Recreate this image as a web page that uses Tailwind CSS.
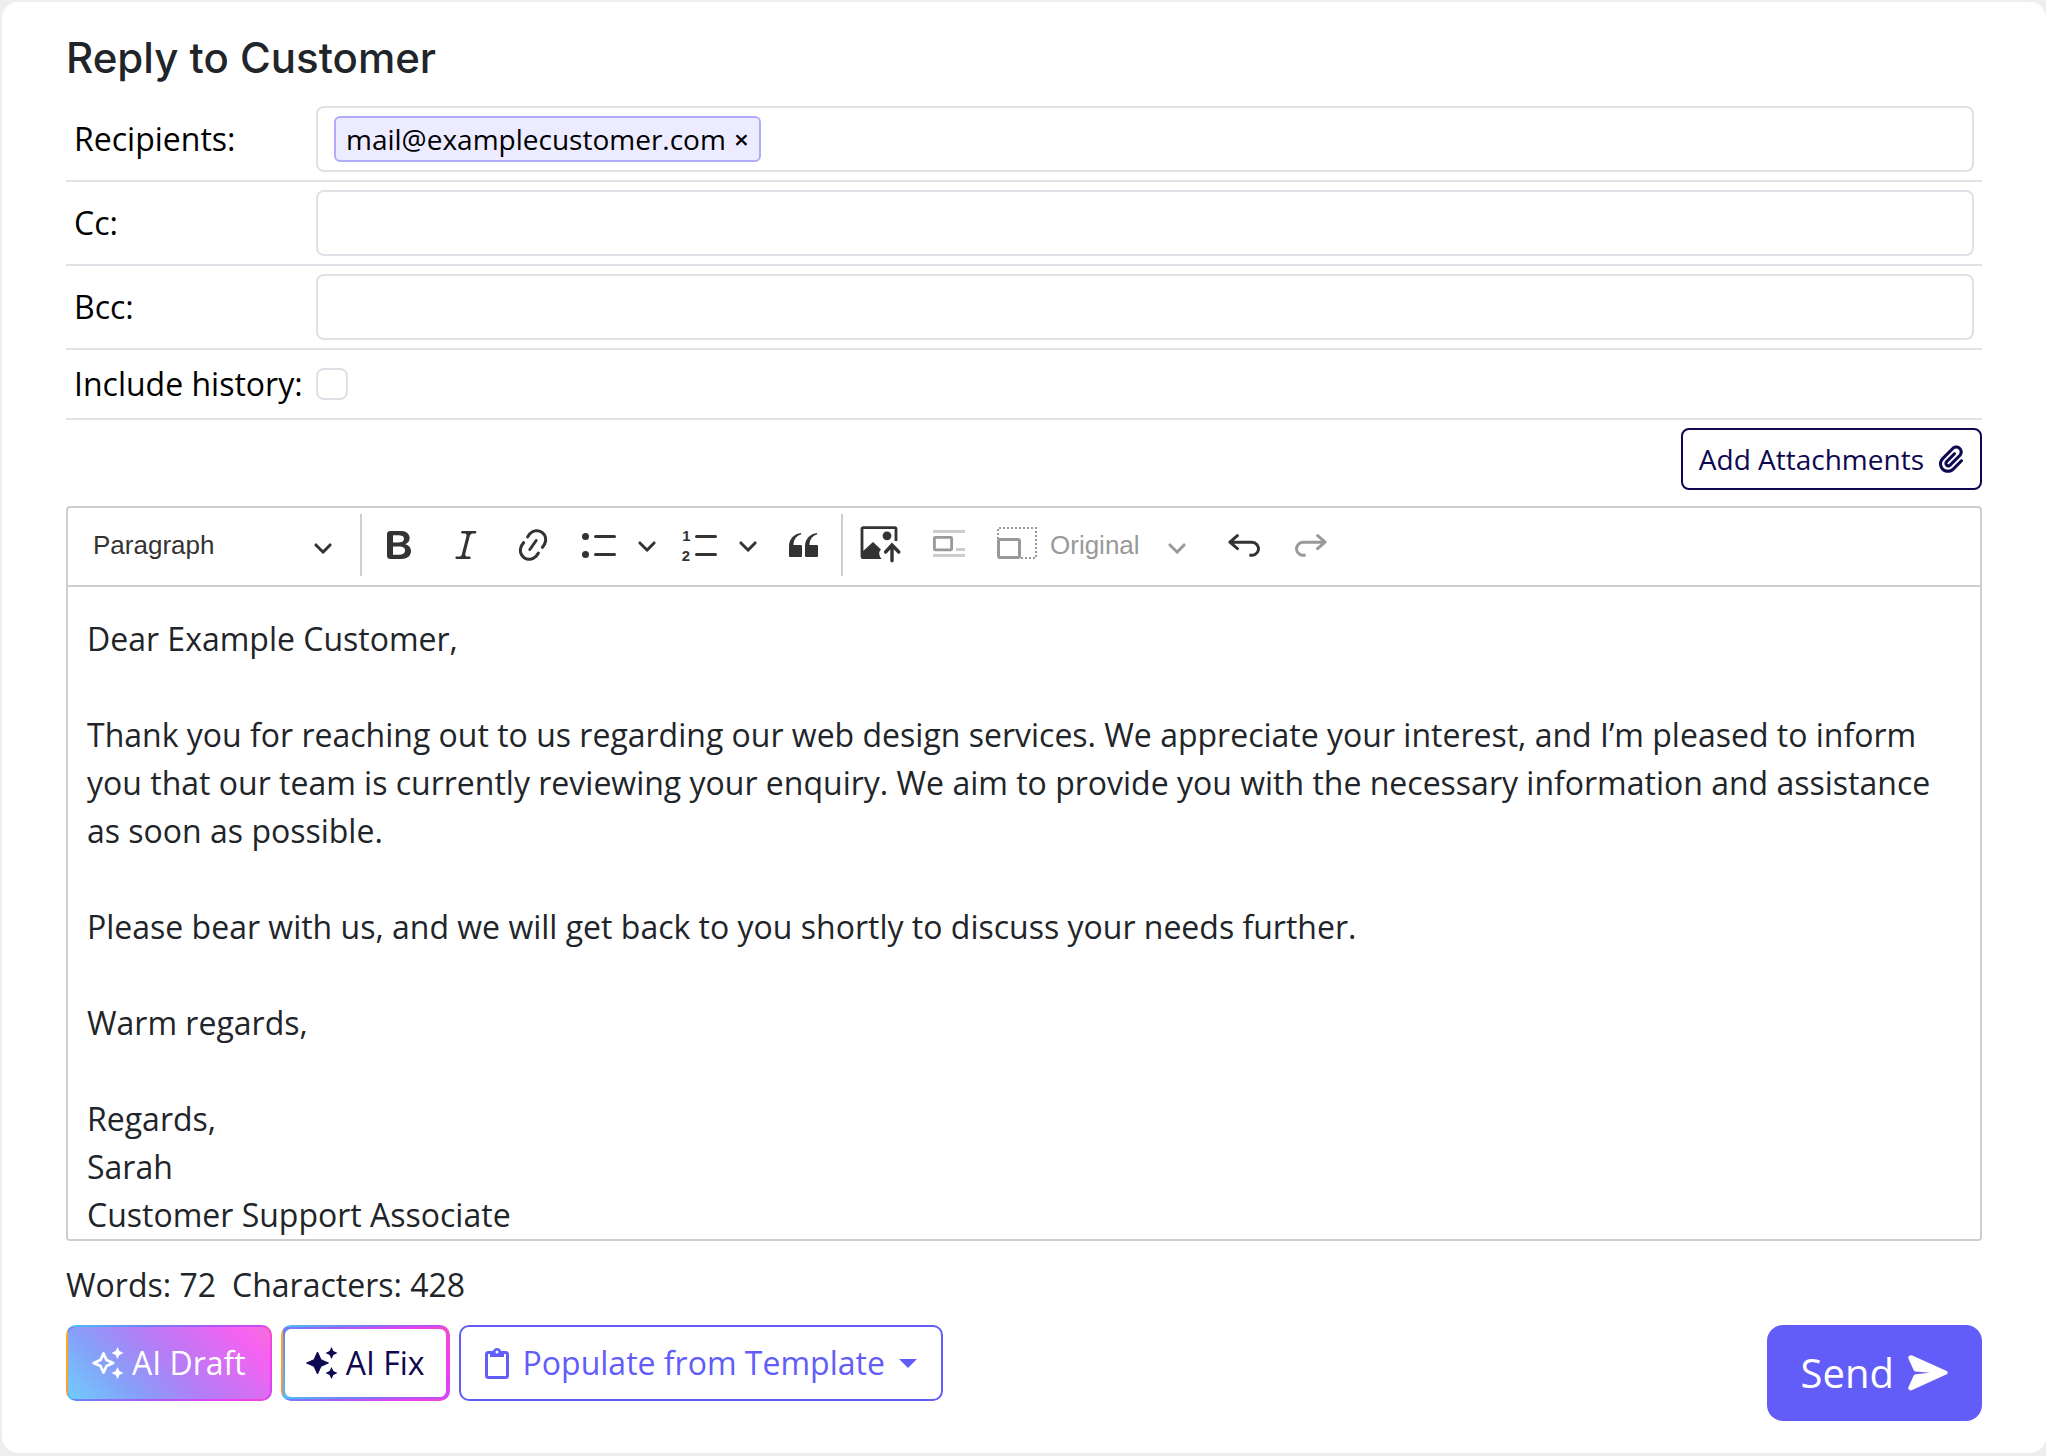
<!DOCTYPE html>
<html lang="en">
<head>
  <meta charset="utf-8">
  <meta name="viewport" content="width=device-width, initial-scale=1">
  <title>Reply to Customer</title>
  <script src="https://cdn.jsdelivr.net/npm/@tailwindcss/browser@4"></script>
</head>
<body class="flex min-h-screen flex-col bg-[#eeeeee] pt-[2px] pb-[3px] pl-[2px] font-['Open_Sans',sans-serif] text-[32px] leading-[48px] text-[#212529]">

<!-- shared icons -->
<svg class="hidden">
  <symbol id="chevron" viewBox="0 0 10 10">
    <path d="M.941 4.523a.75.75 0 1 1 1.06-1.06l3.006 3.005 3.005-3.005a.75.75 0 1 1 1.06 1.06l-3.549 3.55a.75.75 0 0 1-1.168-.136L.941 4.523z"/>
  </symbol>
</svg>

<form class="flex-1 rounded-2xl bg-white px-16 pt-8 pb-8" onsubmit="return false">
  <h2 class="mb-4 font-['Inter',sans-serif] text-[42px] leading-[48px] font-medium">Reply to Customer</h2>

  <!-- recipients -->
  <div class="text-black">
    <div class="flex items-center border-b-2 border-[#dee2e6] p-2">
      <label for="to" class="w-[242px] shrink-0">Recipients:</label>
      <div class="flex h-[66px] flex-1 items-center gap-2 rounded-lg border-2 border-[#dee2e6] px-4">
        <span class="flex h-[46px] items-center gap-2 rounded-md border-2 border-[#b1abfc] bg-[#ecebff] px-[10px] text-[28px]">
          mail@examplecustomer.com
          <button type="button" aria-label="Remove" class="text-[26px] leading-8 font-semibold">×</button>
        </span>
        <input id="to" type="text" class="min-w-0 flex-1 outline-none">
      </div>
    </div>
    <div class="flex items-center border-b-2 border-[#dee2e6] p-2">
      <label for="cc" class="w-[242px] shrink-0">Cc:</label>
      <input id="cc" type="text" class="h-[66px] min-w-0 flex-1 rounded-lg border-2 border-[#dee2e6] px-4 outline-none">
    </div>
    <div class="flex items-center border-b-2 border-[#dee2e6] p-2">
      <label for="bcc" class="w-[242px] shrink-0">Bcc:</label>
      <input id="bcc" type="text" class="h-[66px] min-w-0 flex-1 rounded-lg border-2 border-[#dee2e6] px-4 outline-none">
    </div>
    <div class="flex h-[70px] items-center border-b-2 border-[#dee2e6] p-2">
      <label for="history" class="w-[242px] shrink-0">Include history:</label>
      <input id="history" type="checkbox" class="size-8 appearance-none rounded-lg border-2 border-[#dee2e6] checked:bg-[#625df9]">
    </div>
  </div>

  <div class="mt-2 mb-4 flex justify-end">
    <button type="button" class="flex h-[62px] items-center gap-[14px] rounded-lg border-2 border-[#0e0850] px-4 text-[28px] text-[#0e0850]">
      Add Attachments
      <svg class="h-7 w-[26px]" viewBox="0 0 448 512" fill="currentColor"><path d="M364.2 83.8c-24.4-24.4-64-24.4-88.4 0l-184 184c-42.1 42.1-42.1 110.3 0 152.4s110.3 42.1 152.4 0l152-152c10.9-10.9 28.7-10.9 39.6 0s10.9 28.7 0 39.6l-152 152c-64 64-167.6 64-231.6 0s-64-167.6 0-231.6l184-184c46.3-46.3 121.3-46.3 167.6 0s46.3 121.3 0 167.6l-176 176c-28.6 28.6-75 28.6-103.6 0s-28.6-75 0-103.6l144-144c10.9-10.9 28.7-10.9 39.6 0s10.9 28.7 0 39.6l-144 144c-6.7 6.7-6.7 17.7 0 24.4s17.7 6.7 24.4 0l176-176c24.4-24.4 24.4-64 0-88.4z"/></svg>
    </button>
  </div>

  <!-- editor -->
  <div class="rounded border-2 border-[#ccced1]">
    <div class="flex h-[79px] items-center gap-[7px] border-b-2 border-[#ccced1] pb-[3px] font-['Liberation_Sans',sans-serif] text-[26px] leading-8 text-[#333333]">
      <div class="relative w-[285px]">
        <select aria-label="Heading" class="w-full appearance-none pl-[25px] outline-none">
          <option>Paragraph</option>
          <option>Heading 1</option>
          <option>Heading 2</option>
        </select>
        <svg class="pointer-events-none absolute top-2 right-5 size-5" fill="currentColor"><use href="#chevron"/></svg>
      </div>
      <span class="h-[62px] w-[2px] bg-[#ccced1]"></span>
      <button type="button" aria-label="Bold" class="flex w-[60px] justify-center">
        <svg class="size-10" viewBox="0 0 20 20" fill="currentColor"><path d="M10.187 17H5.773c-.637 0-1.092-.138-1.364-.415-.273-.277-.409-.718-.409-1.323V4.738c0-.617.14-1.062.419-1.332.279-.27.73-.406 1.354-.406h4.68c.69 0 1.288.041 1.793.124.506.083.96.242 1.36.478.341.197.644.447.906.75a3.262 3.262 0 0 1 .808 2.162c0 1.401-.722 2.426-2.167 3.075C15.05 10.175 16 11.315 16 13.01a3.756 3.756 0 0 1-2.296 3.504 6.1 6.1 0 0 1-1.517.377c-.571.073-1.238.11-2 .11zm-.217-6.217H7v4.087h3.069c1.977 0 2.965-.69 2.965-2.072 0-.707-.256-1.22-.768-1.537-.512-.319-1.277-.478-2.296-.478zM7 5.13v3.619h2.606c.729 0 1.292-.067 1.69-.2a1.6 1.6 0 0 0 .91-.765c.165-.267.247-.566.247-.897 0-.707-.26-1.176-.778-1.409-.519-.232-1.31-.348-2.375-.348H7z"/></svg>
      </button>
      <button type="button" aria-label="Italic" class="flex w-[60px] justify-center">
        <svg class="size-10" viewBox="0 0 20 20" fill="currentColor"><path d="m9.586 14.633.021.004c-.036.335.095.655.393.962.082.083.173.15.274.201h1.474a.6.6 0 1 1 0 1.2H5.304a.6.6 0 0 1 0-1.2h1.15c.474-.07.809-.182 1.005-.334.157-.122.291-.32.404-.597l2.416-9.55a1.053 1.053 0 0 0-.281-.823 1.12 1.12 0 0 0-.442-.296H8.15a.6.6 0 0 1 0-1.2h6.443a.6.6 0 1 1 0 1.2h-1.195c-.376.056-.65.155-.823.296-.215.175-.423.439-.623.79l-2.366 9.347z"/></svg>
      </button>
      <button type="button" aria-label="Link" class="flex w-[60px] justify-center">
        <svg class="size-10" viewBox="0 0 20 20" fill="currentColor"><path d="m11.077 15 .991-1.416a.75.75 0 1 1 1.229.86l-1.148 1.64a.748.748 0 0 1-.217.206 5.251 5.251 0 0 1-8.503-5.955.741.741 0 0 1 .12-.274l1.147-1.639a.75.75 0 1 1 1.228.86L4.933 10.7l.006.003a3.75 3.75 0 0 0 6.132 4.294l.006.004zm5.494-5.335a.748.748 0 0 1-.12.274l-1.147 1.639a.75.75 0 1 1-1.228-.86l.86-1.23a3.75 3.75 0 0 0-6.144-4.301l-.86 1.229a.75.75 0 0 1-1.229-.86l1.148-1.64a.748.748 0 0 1 .217-.206 5.251 5.251 0 0 1 8.503 5.955zm-4.563-2.532a.75.75 0 0 1 .184 1.045l-3.155 4.505a.75.75 0 1 1-1.229-.86l3.155-4.506a.75.75 0 0 1 1.045-.184z"/></svg>
      </button>
      <div class="flex items-center">
        <button type="button" aria-label="Bulleted list" class="flex w-[60px] justify-center">
          <svg class="size-10" viewBox="0 0 20 20" fill="currentColor"><path d="M7 5.75c0 .414.336.75.75.75h9.5a.75.75 0 1 0 0-1.5h-9.5a.75.75 0 0 0-.75.75zm0 9c0 .414.336.75.75.75h9.5a.75.75 0 1 0 0-1.5h-9.5a.75.75 0 0 0-.75.75z"/><circle cx="2.75" cy="5.75" r="1.75"/><circle cx="2.75" cy="14.75" r="1.75"/></svg>
        </button>
        <button type="button" aria-label="Bulleted list styles" class="flex w-[34px] justify-center">
          <svg class="size-5" fill="currentColor"><use href="#chevron"/></svg>
        </button>
      </div>
      <div class="flex items-center">
        <button type="button" aria-label="Numbered list" class="flex w-[60px] justify-center">
          <svg class="size-10" viewBox="0 0 20 20" fill="currentColor"><path d="M7 5.75c0 .414.336.75.75.75h9.5a.75.75 0 1 0 0-1.5h-9.5a.75.75 0 0 0-.75.75zm0 9c0 .414.336.75.75.75h9.5a.75.75 0 1 0 0-1.5h-9.5a.75.75 0 0 0-.75.75z"/><text x="0.6" y="8" font-size="7.4" font-weight="700">1</text><text x="0.4" y="18" font-size="7.4" font-weight="700">2</text></svg>
        </button>
        <button type="button" aria-label="Numbered list styles" class="flex w-[34px] justify-center">
          <svg class="size-5" fill="currentColor"><use href="#chevron"/></svg>
        </button>
      </div>
      <button type="button" aria-label="Block quote" class="flex w-[62px] justify-center">
        <svg class="size-10" viewBox="0 0 20 20" fill="currentColor"><path d="M3 10.423a6.5 6.5 0 0 1 6.056-6.408l.038.67C6.448 5.423 5.354 7.663 5.22 10H9c.552 0 .5.432.5.986v4.511c0 .554-.448.503-1 .503h-5c-.552 0-.5-.449-.5-1.003v-4.574zm8 0a6.5 6.5 0 0 1 6.056-6.408l.038.67c-2.646.739-3.74 2.979-3.873 5.315H17c.552 0 .5.432.5.986v4.511c0 .554-.448.503-1 .503h-5c-.552 0-.5-.449-.5-1.003v-4.574z"/></svg>
      </button>
      <span class="h-[62px] w-[2px] bg-[#ccced1]"></span>
      <button type="button" aria-label="Insert image" class="flex w-[60px] justify-center">
        <svg class="size-10 overflow-visible" viewBox="0 0 20 20" fill="currentColor">
          <path d="M18 8V1.8a.5.5 0 0 0-.5-.5h-16a.5.5 0 0 0-.5.5v14.4" fill="none" stroke="currentColor" stroke-width="1.4"/>
          <path d="M.6 13.9 6.5 8.5l4 3.7c-1 .9-1 1.9-.8 2.6.1.9.5 1.6 1.2 2.2H1a.5.5 0 0 1-.4-.5z"/>
          <circle cx="13.5" cy="5.4" r="2.2"/>
          <path d="M16 10v7.9M12.8 13.5 16 10l3.4 3.5" fill="none" stroke="currentColor" stroke-width="1.7" stroke-linecap="round"/>
        </svg>
      </button>
      <button type="button" aria-label="Wrap text" disabled class="flex w-[60px] justify-center text-[#999999]">
        <svg class="size-10" viewBox="0 0 20 20" fill="currentColor">
          <path d="M3 2.500h16V4H3zM3 14.500h16V16H3zM14.500 11.500H19V13h-4.500z" opacity=".5"/>
          <rect x="3.700" y="6.200" width="8.600" height="6.200" rx=".4" fill="none" stroke="currentColor" stroke-width="1.400"/>
        </svg>
      </button>
      <div class="relative w-[223px] text-[#999999]">
        <svg class="pointer-events-none absolute -top-1 left-[13px] size-10" viewBox="0 0 20 20" fill="none" stroke="currentColor">
          <path d="M.5 7V1.500h19v15H12" stroke-dasharray="1 1"/>
          <rect x=".75" y="7.250" width="10.500" height="9" rx=".7" stroke-width="1.500"/>
        </svg>
        <select aria-label="Resize image" disabled class="w-full appearance-none pl-[66px] outline-none">
          <option>Original</option>
        </select>
        <svg class="pointer-events-none absolute top-2 right-5 size-5" fill="currentColor"><use href="#chevron"/></svg>
      </div>
      <button type="button" aria-label="Undo" class="flex w-[60px] justify-center">
        <svg class="size-10" viewBox="0 0 20 20" fill="currentColor"><path d="m5.042 9.367 2.189 1.837a.75.75 0 0 1-.965 1.149l-3.788-3.18a.747.747 0 0 1-.21-.284.75.75 0 0 1 .17-.945L6.23 4.762a.75.75 0 1 1 .964 1.15L4.863 7.866h8.917A.75.75 0 0 1 14 7.9a4 4 0 1 1-1.477 7.718l.344-1.489a2.5 2.5 0 1 0 1.094-4.73l.008-.032H5.042z"/></svg>
      </button>
      <button type="button" aria-label="Redo" disabled class="flex w-[60px] justify-center text-[#999999]">
        <svg class="size-10" viewBox="0 0 20 20" fill="currentColor"><path d="m14.958 9.367-2.189 1.837a.75.75 0 0 0 .965 1.149l3.788-3.18a.747.747 0 0 0 .21-.284.75.75 0 0 0-.17-.945L13.77 4.762a.75.75 0 1 0-.964 1.15l2.331 1.955H6.22A.75.75 0 0 0 6 7.9a4 4 0 1 0 1.477 7.718l-.344-1.489A2.5 2.5 0 1 1 6.039 9.4l-.008-.032h8.927z"/></svg>
      </button>
    </div>
    <div contenteditable="true" spellcheck="false" role="textbox" aria-label="Message" class="space-y-12 px-[19px] pt-7 outline-none">
      <p>Dear Example Customer,</p>
      <p>Thank you for reaching out to us regarding our web design services. We appreciate your interest, and I’m pleased to inform you that our team is currently reviewing your enquiry. We aim to provide you with the necessary information and assistance as soon as possible.</p>
      <p>Please bear with us, and we will get back to you shortly to discuss your needs further.</p>
      <p>Warm regards,</p>
      <p>Regards,<br>Sarah<br>Customer Support Associate</p>
    </div>
  </div>

  <div class="mt-5 mb-4 flex gap-4">
    <span>Words: 72</span>
    <span>Characters: 428</span>
  </div>

  <!-- actions -->
  <div class="flex items-start gap-[9px]">
    <button type="button" class="h-[76px] rounded-[10px] border-2 border-transparent bg-[linear-gradient(45deg,#4cc0fb_0%,#6a86f7_16%,#a45bf4_30%,#f33bef_50%,#f27090_75%,#ffa520_90%)] bg-[length:200%_100%] text-white">
      <span class="flex h-full items-center gap-2 rounded-lg bg-white/20 px-6">
        <svg class="size-8" viewBox="0 0 32 32" fill="currentColor">
          <path d="M11.500 6.500 14.500 13l6.700 3-6.700 3-3 6.500-3-6.500-6.700-3 6.700-3z" fill="none" stroke="currentColor" stroke-width="2.800" stroke-linejoin="round"/>
          <path d="M25.500 0l1.900 4.100L31.500 6l-4.100 1.900-1.900 4.100-1.900-4.100L19.500 6l4.100-1.900zM25.500 20l1.900 4.100 4.100 1.900-4.100 1.900-1.900 4.100-1.900-4.100-4.100-1.900 4.100-1.900z"/>
        </svg>
        AI Draft
      </span>
    </button>
    <button type="button" class="h-[76px] rounded-[10px] border-2 border-transparent bg-[linear-gradient(45deg,#4cc0fb_0%,#6a86f7_16%,#a45bf4_30%,#f33bef_50%,#f27090_75%,#ffa520_90%)] bg-[length:200%_100%] p-[2px] text-[#0e0850]">
      <span class="flex h-full items-center gap-2 rounded-md bg-white px-[21px]">
        <svg class="size-8" viewBox="0 0 32 32" fill="currentColor">
          <path d="M11.500 5 15 12.700l7.500 3.300-7.500 3.300L11.500 27 8 19.300.500 16 8 12.700z" stroke="currentColor" stroke-width="1" stroke-linejoin="round"/>
          <path d="M25.500 0l1.900 4.100L31.500 6l-4.100 1.900-1.900 4.100-1.900-4.100L19.500 6l4.100-1.900zM25.500 20l1.900 4.100 4.100 1.900-4.100 1.900-1.900 4.100-1.900-4.100-4.100-1.900 4.100-1.900z"/>
        </svg>
        AI Fix
      </span>
    </button>
    <button type="button" class="flex h-[76px] items-center gap-[14px] rounded-[10px] border-2 border-[#625df9] px-6 text-[#625df9]">
      <svg class="h-8 w-6" viewBox="0 0 24 32" fill="none" stroke="currentColor">
        <rect x="1.500" y="5.500" width="21" height="25" rx="2" stroke-width="3"/>
        <path d="M5 4h3a4.200 4.200 0 0 1 8 0h3v6H5z" fill="currentColor" stroke="none"/>
        <circle cx="12" cy="5" r="1.500" fill="white" stroke="none"/>
      </svg>
      Populate from Template
      <svg class="h-[9px] w-[18px]" viewBox="0 0 18 9" fill="currentColor"><path d="M0 0h18L9 9z"/></svg>
    </button>
    <button type="submit" class="ml-auto flex h-24 items-center gap-[14px] rounded-2xl bg-[#625df9] px-[34px] text-[40px] text-white">
      Send
      <svg class="h-9 w-10" viewBox="0 0 40 36" fill="currentColor"><path d="M4.300.4 38.700 16a1.900 1.900 0 0 1 0 3.300L4.300 35.100C2 36.100-.5 34.300.5 32l5-11c.4-1 1.200-1.600 2.200-1.700L22 17.700 7.700 16.400c-1-.1-1.800-.7-2.200-1.700L.5 3.700C-.5 1.300 2-.6 4.300.4z"/></svg>
    </button>
  </div>
</form>

</body>
</html>
